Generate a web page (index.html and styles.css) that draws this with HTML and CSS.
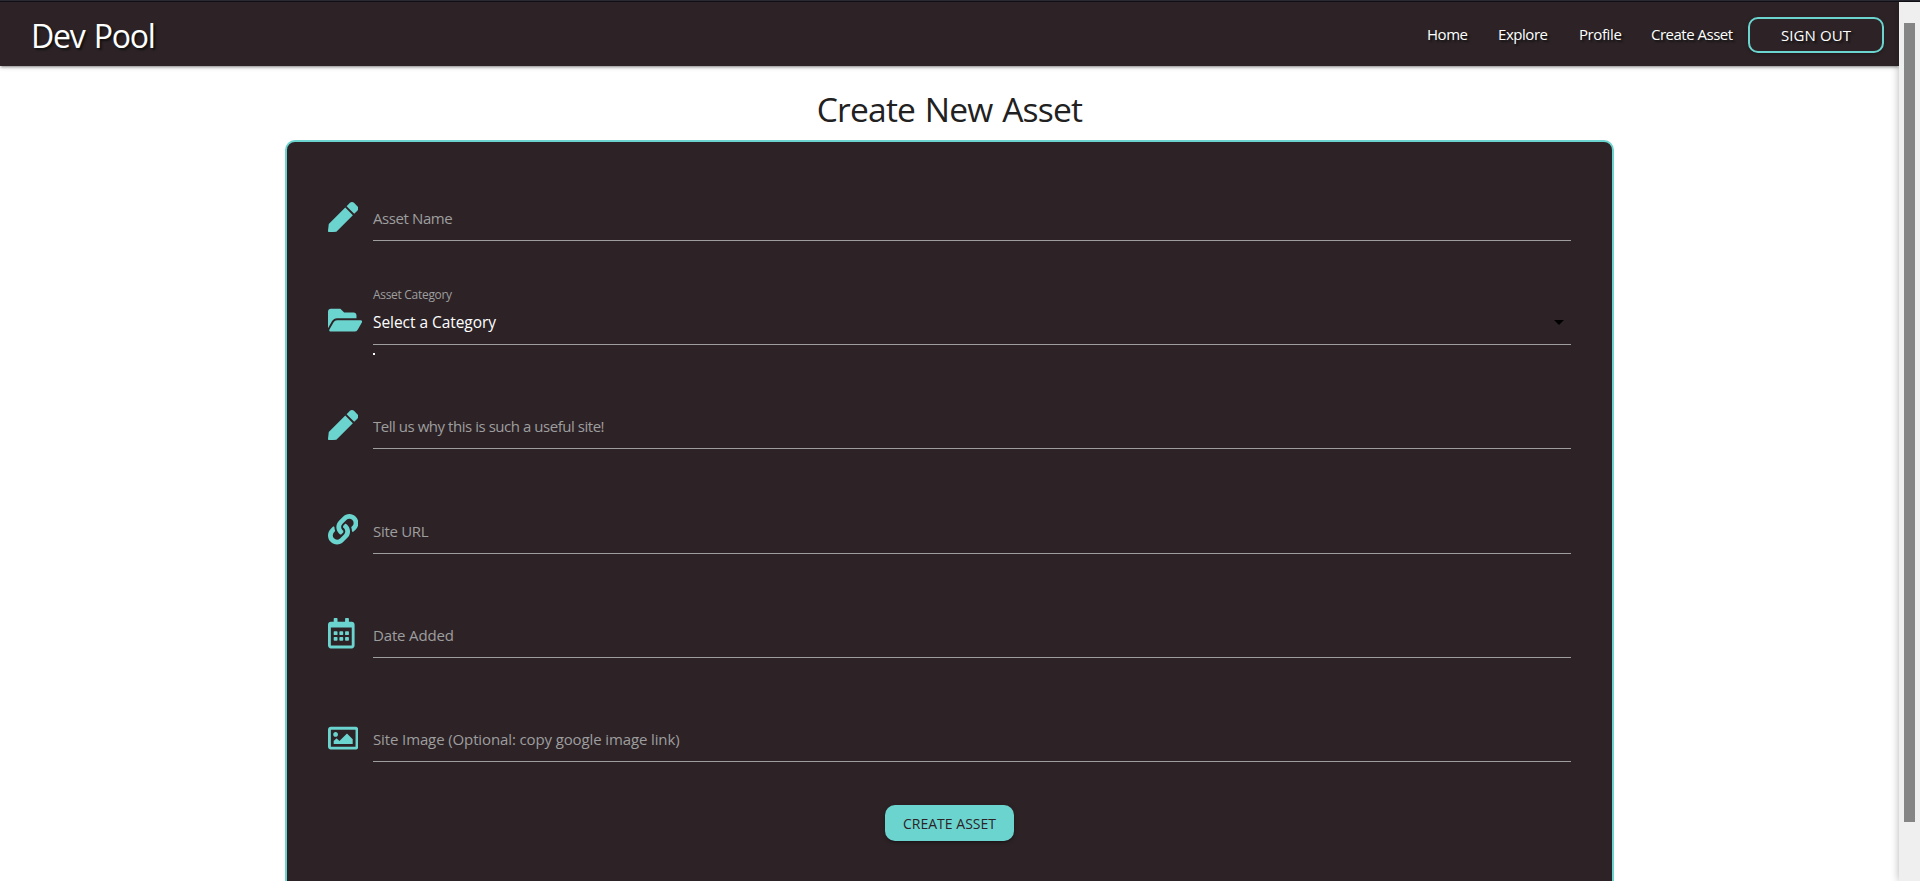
FILE: index.html
```html
<!DOCTYPE html>
<html lang="en">
<head>
<meta charset="utf-8">
<title>Dev Pool</title>
<link rel="stylesheet" href="styles.css">
</head>
<body>
<div class="edge"></div>
<div class="viewport">
  <div class="page">
    <nav class="navbar">
      <a class="brand">Dev Pool</a>
      <div class="links">
        <a class="link home">Home</a>
        <a class="link explore">Explore</a>
        <a class="link profile">Profile</a>
        <a class="link create">Create Asset</a>
        <a class="signout"><span>SIGN OUT</span></a>
      </div>
    </nav>
    <h1 class="title"><span>Create New Asset</span></h1>
    <form class="card">
      <div class="row">
        <svg class="icon" viewBox="0 0 512 512"><path d="M290.74 93.24l128.02 128.02-277.99 277.99-114.14 12.6C11.35 513.54-1.56 500.62.14 485.34l12.7-114.22 277.9-277.88zm207.2-19.06l-60.11-60.11c-18.75-18.75-49.16-18.75-67.91 0l-56.55 56.55 128.02 128.02 56.55-56.55c18.75-18.76 18.75-49.16 0-67.91z"/></svg>
        <div class="field"><label class="label name">Asset Name</label></div>
      </div>
      <div class="row">
        <svg class="icon wide" viewBox="0 0 576 512"><path d="M572.694 292.093L500.27 416.248A63.997 63.997 0 0 1 444.989 448H45.025c-18.523 0-30.064-20.093-20.731-36.093l72.424-124.155A64 64 0 0 1 152 256h399.964c18.523 0 30.064 20.093 20.73 36.093zM152 224h328v-48c0-26.51-21.49-48-48-48H272l-64-64H48C21.49 64 0 85.49 0 112v278.046l69.077-118.418C86.214 242.25 117.989 224 152 224z"/></svg>
        <div class="field select">
          <label class="small-label">Asset Category</label>
          <span class="label value">Select a Category</span>
          <svg class="caret" viewBox="0 0 10 5"><path d="M0 0h10L5 5z"/></svg>
          <i class="dot"></i>
        </div>
      </div>
      <div class="row">
        <svg class="icon" viewBox="0 0 512 512"><path d="M290.74 93.24l128.02 128.02-277.99 277.99-114.14 12.6C11.35 513.54-1.56 500.62.14 485.34l12.7-114.22 277.9-277.88zm207.2-19.06l-60.11-60.11c-18.75-18.75-49.16-18.75-67.91 0l-56.55 56.55 128.02 128.02 56.55-56.55c18.75-18.76 18.75-49.16 0-67.91z"/></svg>
        <div class="field"><label class="label why">Tell us why this is such a useful site!</label></div>
      </div>
      <div class="row">
        <svg class="icon" viewBox="0 0 512 512"><path d="M326.612 185.391c59.747 59.809 58.927 155.698.36 214.59-.11.12-.24.25-.36.37l-67.2 67.2c-59.27 59.27-155.699 59.262-214.96 0-59.27-59.26-59.27-155.7 0-214.96l37.106-37.106c9.84-9.84 26.786-3.3 27.294 10.606.648 17.722 3.826 35.527 9.69 52.721 1.986 5.822.567 12.262-3.783 16.612l-13.087 13.087c-28.026 28.026-28.905 73.66-1.155 101.96 28.024 28.579 74.086 28.749 102.325.51l67.2-67.19c28.191-28.191 28.073-73.757 0-101.83-3.701-3.694-7.429-6.564-10.341-8.569a16.037 16.037 0 0 1-6.947-12.606c-.396-10.567 3.348-21.456 11.698-29.806l21.054-21.055c5.521-5.521 14.182-6.199 20.584-1.731a152.482 152.482 0 0 1 20.522 17.197zM467.547 44.449c-59.261-59.262-155.69-59.27-214.96 0l-67.2 67.2c-.12.12-.25.25-.36.37-58.566 58.892-59.387 154.781.36 214.59a152.454 152.454 0 0 0 20.521 17.196c6.402 4.468 15.064 3.789 20.584-1.731l21.054-21.055c8.35-8.35 12.094-19.239 11.698-29.806a16.037 16.037 0 0 0-6.947-12.606c-2.912-2.005-6.64-4.875-10.341-8.569-28.073-28.073-28.191-73.639 0-101.83l67.2-67.19c28.239-28.239 74.3-28.069 102.325.51 27.75 28.3 26.872 73.934-1.155 101.96l-13.087 13.087c-4.35 4.35-5.769 10.79-3.783 16.612 5.864 17.194 9.042 34.999 9.69 52.721.509 13.906 17.454 20.446 27.294 10.606l37.106-37.106c59.271-59.259 59.271-155.699.001-214.959z"/></svg>
        <div class="field"><label class="label url">Site URL</label></div>
      </div>
      <div class="row">
        <svg class="icon narrow" viewBox="0 0 448 512"><path d="M148 288h-40c-6.6 0-12-5.4-12-12v-40c0-6.6 5.4-12 12-12h40c6.6 0 12 5.4 12 12v40c0 6.6-5.4 12-12 12zm108-12v-40c0-6.6-5.4-12-12-12h-40c-6.6 0-12 5.4-12 12v40c0 6.6 5.4 12 12 12h40c6.6 0 12-5.4 12-12zm96 0v-40c0-6.6-5.4-12-12-12h-40c-6.6 0-12 5.4-12 12v40c0 6.6 5.4 12 12 12h40c6.6 0 12-5.4 12-12zm-96 96v-40c0-6.6-5.4-12-12-12h-40c-6.6 0-12 5.4-12 12v40c0 6.6 5.4 12 12 12h40c6.6 0 12-5.4 12-12zm-96 0v-40c0-6.6-5.4-12-12-12h-40c-6.6 0-12 5.4-12 12v40c0 6.6 5.4 12 12 12h40c6.6 0 12-5.4 12-12zm192 0v-40c0-6.6-5.4-12-12-12h-40c-6.6 0-12 5.4-12 12v40c0 6.6 5.4 12 12 12h40c6.6 0 12-5.4 12-12zm96-260v352c0 26.5-21.5 48-48 48H48c-26.5 0-48-21.5-48-48V112c0-26.5 21.5-48 48-48h48V12c0-6.6 5.4-12 12-12h40c6.6 0 12 5.4 12 12v52h128V12c0-6.6 5.4-12 12-12h40c6.6 0 12 5.4 12 12v52h48c26.5 0 48 21.5 48 48zm-48 346V160H48v298c0 3.3 2.7 6 6 6h340c3.3 0 6-2.7 6-6z"/></svg>
        <div class="field"><label class="label date">Date Added</label></div>
      </div>
      <div class="row">
        <svg class="icon" viewBox="0 0 512 512"><path d="M464 64H48C21.49 64 0 85.49 0 112v288c0 26.51 21.49 48 48 48h416c26.51 0 48-21.49 48-48V112c0-26.51-21.49-48-48-48zm-6 336H54a6 6 0 0 1-6-6V118a6 6 0 0 1 6-6h404a6 6 0 0 1 6 6v276a6 6 0 0 1-6 6zM128 152c-22.091 0-40 17.909-40 40s17.909 40 40 40 40-17.909 40-40-17.909-40-40-40zM96 352h320v-80l-87.515-87.515c-4.686-4.686-12.284-4.686-16.971 0L192 304l-39.515-39.515c-4.686-4.686-12.284-4.686-16.971 0L96 304v48z"/></svg>
        <div class="field"><label class="label image">Site Image (Optional: copy google image link)</label></div>
      </div>
      <button class="submit" type="button"><span>CREATE ASSET</span></button>
    </form>
  </div>
  <div class="scrollbar"><div class="thumb"></div></div>
</div>
</body>
</html>
```
FILE: styles.css
```css
* { box-sizing: border-box; }
body {
  margin: 0;
  height: 881px;
  overflow: hidden;
  display: flex;
  flex-direction: column;
  background: #fff;
  font-family: "Open Sans", "Noto Sans", sans-serif;
}
.edge { height: 2px; flex: none; background: #292a33; border-bottom: 1px solid #111014; }
.viewport { flex: 1; display: flex; min-height: 0; }
.page { flex: 1; overflow: hidden; display: flex; flex-direction: column; align-items: center; }
.navbar {
  width: 100%;
  height: 64px;
  flex: none;
  padding: 0 15px 0 31px;
  display: flex;
  justify-content: space-between;
  align-items: center;
  background: #2d2327;
  color: #fff;
  text-shadow: 2px 2px 2px #111;
  box-shadow: 0 2px 2px 0 rgba(0,0,0,.14), 0 3px 1px -2px rgba(0,0,0,.12), 0 1px 5px 0 rgba(0,0,0,.2);
}
.brand { font-size: 32px; line-height: 64px; letter-spacing: -1.2px; word-spacing: 2px; padding-top: 3px; }
.links { display: flex; align-items: center; }
.link { font-size: 15px; line-height: 64px; margin: 0 15px; white-space: nowrap; }
.home { width: 41px; letter-spacing: -.45px; }
.explore { width: 51px; letter-spacing: -.45px; }
.profile { width: 43px; margin-right: 14px; letter-spacing: -.4px; }
.create { width: 82px; letter-spacing: -.5px; }
.signout {
  width: 136px;
  height: 36px;
  margin-top: 2px;
  border: 2px solid #6cd4ce;
  border-radius: 10px;
  display: flex;
  justify-content: center;
  font-size: 15px;
  line-height: 32px;
  letter-spacing: .1px;
  box-shadow: 0 2px 2px 0 rgba(0,0,0,.14), 0 1px 5px 0 rgba(0,0,0,.12);
}
.title {
  margin: 21px 0 0;
  height: 53px;
  flex: none;
  font-size: 33.6px;
  font-weight: 400;
  line-height: 44px;
  letter-spacing: -.8px;
  word-spacing: 1.7px;
  color: #212121;
}
.card {
  width: 1329px;
  height: 820px;
  flex: none;
  padding: 45px 41px 0;
  display: flex;
  flex-direction: column;
  align-items: center;
  background: #2d2327;
  border: 2px solid #6cd4ce;
  border-radius: 10px;
}
.row { width: 100%; height: 54px; margin-bottom: 50.2px; display: flex; flex: none; }
.icon { width: 30.4px; height: 30.4px; margin: 14.6px 14.6px 0 0; fill: #6cd4ce; flex: none; }
.wide { width: 34.2px; margin: 14px 10.8px 0 0; }
.narrow { width: 26.6px; margin-right: 18.4px; }
.field { flex: 1; border-bottom: 1px solid #9e9e9e; padding-top: 18px; white-space: nowrap; }
.label { display: block; font-size: 15px; line-height: 27px; color: #9e9e9e; letter-spacing: -.4px; }
.why { letter-spacing: -.46px; }
.url { letter-spacing: -.3px; }
.date { letter-spacing: -.15px; }
.image { letter-spacing: -.12px; }
.select { position: relative; padding-top: 0; }
.small-label { display: block; font-size: 12px; line-height: 18px; margin-top: -5px; height: 23px; color: #9e9e9e; letter-spacing: -.3px; }
.value { color: #fff; font-size: 15.5px; letter-spacing: -.05px; }
.caret { position: absolute; right: 7px; top: 29px; width: 10px; height: 5px; fill: #000; }
.dot { position: absolute; left: 0; top: 62px; width: 2px; height: 2px; background: #fff; }
.submit {
  width: 129px;
  height: 36px;
  margin: -7.2px 0 0;
  padding: 2px 0 0;
  flex: none;
  border: 0;
  border-radius: 10px;
  background: #6cd4ce;
  color: #2d2327;
  font-family: inherit;
  font-size: 14px;
  line-height: 34px;
  letter-spacing: .02px;
  box-shadow: 0 2px 2px 0 rgba(0,0,0,.14), 0 3px 1px -2px rgba(0,0,0,.12), 0 1px 5px 0 rgba(0,0,0,.2);
}
.scrollbar { width: 21px; flex: none; padding: 21px 5px 0; background: #efefef; box-shadow: 0 0 8px rgba(0,0,0,.3); }
.thumb { width: 11px; height: 799px; background: #858585; }
```
